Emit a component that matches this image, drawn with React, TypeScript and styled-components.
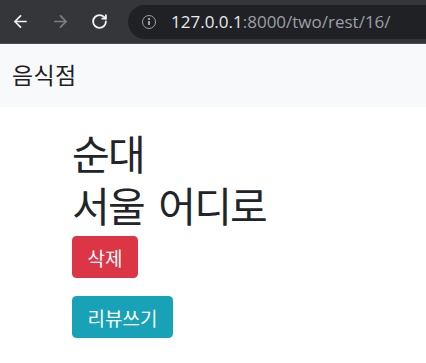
import React from 'react';
import styled, { createGlobalStyle } from 'styled-components';
import { ArrowLeft, ArrowRight, RotateCw } from 'lucide-react';

const GlobalStyle = createGlobalStyle`
  html, body {
    margin: 0;
    padding: 0;
    background: #fff;
  }
  body {
    font-family: "Noto Sans CJK KR", "Noto Sans", sans-serif;
    color: #212529;
  }
`;

const BrowserBar = styled.div`
  height: 43px;
  background-color: #35363a;
  border-bottom: 1px solid #4a4b4f;
  display: flex;
  align-items: center;
  padding-left: 11px;
`;

const NavButton = styled.div<{ dim?: boolean }>`
  width: 40px;
  height: 34px;
  display: flex;
  align-items: center;
  color: ${(p) => (p.dim ? '#7f8084' : '#f1f3f4')};
`;

const Omnibox = styled.div`
  flex: 1;
  height: 34px;
  margin-left: -3px;
  border-radius: 17px 0 0 17px;
  background-color: #202124;
  display: flex;
  align-items: center;
  padding-left: 14px;
  font-family: "Open Sans", "Noto Sans", sans-serif;
  font-size: 17px;
  white-space: nowrap;
  overflow: hidden;
`;

const InfoIcon = styled.span`
  width: 14px;
  height: 14px;
  border: 1.6px solid #9aa0a6;
  border-radius: 50%;
  box-sizing: border-box;
  position: relative;
  margin-right: 15px;
  flex-shrink: 0;
  &::before {
    content: '';
    position: absolute;
    left: 4.6px;
    top: 2.2px;
    width: 2px;
    height: 2px;
    background: #9aa0a6;
  }
  &::after {
    content: '';
    position: absolute;
    left: 4.6px;
    top: 5px;
    width: 2px;
    height: 4.5px;
    background: #9aa0a6;
  }
`;

const Host = styled.span`
  color: #e8eaed;
`;

const Path = styled.span`
  color: #9aa0a6;
`;

const Navbar = styled.nav`
  height: 63px;
  background-color: #f8f9fa;
  display: flex;
  align-items: center;
  padding-left: 12px;
`;

const Brand = styled.a`
  font-size: 23px;
  letter-spacing: 0.4px;
  color: rgba(0, 0, 0, 0.9);
  text-decoration: none;
  line-height: 1;
  margin-top: -2px;
`;

const Container = styled.main`
  padding: 19px 0 0 72px;
`;

const Title = styled.h1`
  margin: 0 0 6px;
  font-size: 41px;
  letter-spacing: -1.8px;
  word-spacing: 7px;
  font-weight: 400;
  line-height: 52px;
  color: #212529;
`;

const Btn = styled.button<{ tone: 'danger' | 'info' }>`
  display: inline-flex;
  align-items: center;
  justify-content: center;
  height: 42px;
  padding: 0 15.5px;
  border: none;
  border-radius: 4.5px;
  font-family: "Noto Sans CJK KR", sans-serif;
  font-size: 19px;
  color: #fff;
  background-color: ${(p) => (p.tone === 'danger' ? '#dc3545' : '#17a2b8')};
`;

const Form = styled.form`
  margin: 0 0 18px;
`;

export default function App() {
  return (
    <>
      <GlobalStyle />
      <BrowserBar>
        <NavButton>
          <ArrowLeft size={19} strokeWidth={2.2} />
        </NavButton>
        <NavButton dim>
          <ArrowRight size={19} strokeWidth={2.2} />
        </NavButton>
        <NavButton>
          <RotateCw size={17} strokeWidth={2.6} />
        </NavButton>
        <Omnibox>
          <InfoIcon />
          <Host>127.0.0.1</Host>
          <Path>:8000/two/rest/16/</Path>
        </Omnibox>
      </BrowserBar>
      <Navbar>
        <Brand href="#">음식점</Brand>
      </Navbar>
      <Container>
        <Title>
          순대
          <br />
          서울 어디로
        </Title>
        <Form>
          <Btn tone="danger" type="button">삭제</Btn>
        </Form>
        <Btn tone="info" type="button">리뷰쓰기</Btn>
      </Container>
    </>
  );
}
